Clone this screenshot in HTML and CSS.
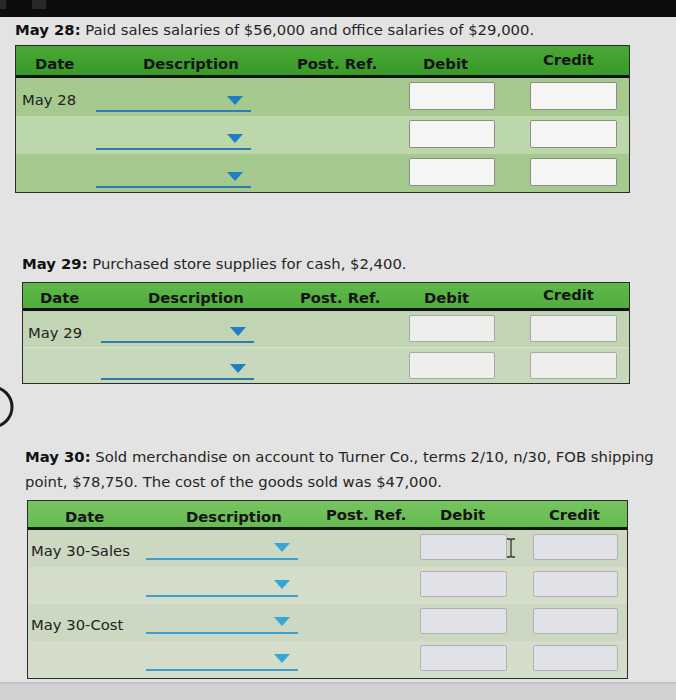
FILE: index.html
```html
<!DOCTYPE html>
<html>
<head>
<meta charset="utf-8">
<link rel="stylesheet" href="styles.css">
</head>
<body>
<div class="page">
  <div class="topbar"><span class="tb-icon a"></span><span class="tb-icon b"></span></div>

  <section class="entry e1">
    <p class="title"><b>May 28:</b> Paid sales salaries of $56,000 and office salaries of $29,000.</p>
    <div class="jtable t1">
      <div class="head">
        <span class="h-date">Date</span><span class="h-desc">Description</span><span class="h-post">Post. Ref.</span><span class="h-debit">Debit</span><span class="h-credit">Credit</span>
      </div>
      <div class="row dark"><span class="date">May 28</span><span class="dd"><i class="tri"></i></span><span></span><span class="in debit"></span><span class="in credit"></span></div>
      <div class="row light"><span class="date"></span><span class="dd"><i class="tri"></i></span><span></span><span class="in debit"></span><span class="in credit"></span></div>
      <div class="row dark"><span class="date"></span><span class="dd"><i class="tri"></i></span><span></span><span class="in debit"></span><span class="in credit"></span></div>
    </div>
  </section>

  <section class="entry e2">
    <p class="title"><b>May 29:</b> Purchased store supplies for cash, $2,400.</p>
    <div class="jtable t2">
      <div class="head">
        <span class="h-date">Date</span><span class="h-desc">Description</span><span class="h-post">Post. Ref.</span><span class="h-debit">Debit</span><span class="h-credit">Credit</span>
      </div>
      <div class="row dark"><span class="date">May 29</span><span class="dd"><i class="tri"></i></span><span></span><span class="in debit"></span><span class="in credit"></span></div>
      <div class="row light"><span class="date"></span><span class="dd"><i class="tri"></i></span><span></span><span class="in debit"></span><span class="in credit"></span></div>
    </div>
  </section>

  <section class="entry e3">
    <p class="title"><b>May 30:</b> Sold merchandise on account to Turner Co., terms 2/10, n/30, FOB shipping<br>point, $78,750. The cost of the goods sold was $47,000.</p>
    <div class="jtable t3">
      <div class="head">
        <span class="h-date">Date</span><span class="h-desc">Description</span><span class="h-post">Post. Ref.</span><span class="h-debit">Debit</span><span class="h-credit">Credit</span>
      </div>
      <div class="row dark"><span class="date">May 30-Sales</span><span class="dd"><i class="tri"></i></span><span></span><span class="in debit"></span><span class="in credit"></span></div>
      <div class="row light"><span class="date"></span><span class="dd"><i class="tri"></i></span><span></span><span class="in debit"></span><span class="in credit"></span></div>
      <div class="row dark"><span class="date">May 30-Cost</span><span class="dd"><i class="tri"></i></span><span></span><span class="in debit"></span><span class="in credit"></span></div>
      <div class="row light"><span class="date"></span><span class="dd"><i class="tri"></i></span><span></span><span class="in debit"></span><span class="in credit"></span></div>
      <svg class="ibeam" width="10" height="20" viewBox="0 0 10 20"><path d="M1 1 H4 L5 2 L6 1 H9 M5 2 V18 M1 19 H4 L5 18 L6 19 H9" fill="none" stroke="#333" stroke-width="1.3"/></svg>
    </div>
  </section>

  <div class="bottomband"></div>
  <svg class="arc" width="20" height="50" viewBox="0 0 20 50"><circle cx="-8" cy="24" r="20" fill="none" stroke="#1e1a1a" stroke-width="3"/></svg>
</div>
</body>
</html>
```
FILE: styles.css
```css
* { box-sizing: border-box; }
html, body { margin: 0; padding: 0; }
body {
  background: #e4e3e3;
  font-family: "DejaVu Sans", Verdana, sans-serif;
  color: #222;
  width: 676px;
  height: 700px;
  overflow: hidden;
}
.page { position: relative; width: 676px; height: 700px; }

.topbar { height: 17px; background: #0e0d0d; display: flex; gap: 20px; padding-left: 0; }
.tb-icon { display: block; height: 9px; background: #2a2828; }
.tb-icon.a { width: 6px; }
.tb-icon.b { width: 14px; margin-left: 6px; }

.title { margin: 0; font-size: 14.8px; line-height: 18px; color: #262626; }
.title b { color: #111; }

.entry.e1 { padding: 4px 0 0 15px; }
.entry.e1 .jtable { margin-top: 6px; width: 615px; }
.entry.e2 { padding: 62px 0 0 22px; }
.entry.e2 .jtable { margin-top: 9px; width: 608px; }
.entry.e3 { padding: 60px 0 0 25px; }
.entry.e3 .title { line-height: 25px; }
.entry.e3 .jtable { margin-top: 6px; margin-left: 2px; width: 601px; }

.jtable { position: relative; border: 1px solid #2b2b2b; }
.head {
  display: grid;
  align-items: center;
  font-weight: bold;
  font-size: 14.8px;
  color: #141414;
  border-bottom: 3px solid #121212;
}
.row { display: grid; align-items: start; font-size: 14.8px; color: #222; }

/* table 1 */
.t1 .head { height: 32px; padding-top: 5px; background: linear-gradient(#4aa736, #389a28); }
.t1 .head, .t1 .row { grid-template-columns: 77px 163px 149px 96px 1fr; }
.t1 .h-date { padding-left: 19px; }
.t1 .h-desc { padding-left: 50px; }
.t1 .h-post { padding-left: 41px; }
.t1 .h-debit { padding-left: 18px; }
.t1 .h-credit { padding-left: 42px; margin-top: -8px; }
.t1 .row { height: 38px; }
.t1 .row.dark { background: #a5c98f; }
.t1 .row.light { background: #bcd8aa; }
.t1 .date { padding: 13px 0 0 6px; }
.t1 .dd { margin: 18px 0 0 3px; width: 155px; height: 16px; }
.t1 .in { height: 28px; margin-top: 4px; background: #f5f5f3; border: 1px solid #8c8c8c; border-radius: 2px; }
.t1 .in.debit { margin-left: 4px; width: 86px; }
.t1 .in.credit { margin-left: 29px; width: 87px; }

/* table 2 */
.t2 .head { height: 28px; padding-top: 3px; background: linear-gradient(#5db949, #52ac3e); }
.t2 .head, .t2 .row { grid-template-columns: 78px 155px 150px 100px 1fr; }
.t2 .h-date { padding-left: 17px; }
.t2 .h-desc { padding-left: 47px; }
.t2 .h-post { padding-left: 44px; }
.t2 .h-debit { padding-left: 18px; }
.t2 .h-credit { padding-left: 37px; margin-top: -6px; }
.t2 .row { height: 36px; }
.t2 .row.dark { background: #c1d4b4; }
.t2 .row.light { background: #c8d8bd; border-top: 1px solid #d6e0cd; }
.t2 .date { padding: 13px 0 0 5px; }
.t2 .dd { margin: 16px 0 0 0; width: 153px; height: 16px; }
.t2 .in { height: 27px; margin-top: 4px; background: #eeeeec; border: 1px solid #a8a8a8; border-radius: 2px; }
.t2 .in.debit { margin-left: 3px; width: 86px; }
.t2 .in.credit { margin-left: 24px; width: 87px; }

/* table 3 */
.t3 .head { height: 29px; padding-top: 4px; background: linear-gradient(#75c45f, #66bb52); }
.t3 .head, .t3 .row { grid-template-columns: 118px 156px 115px 110px 1fr; }
.t3 .h-date { padding-left: 37px; }
.t3 .h-desc { padding-left: 40px; }
.t3 .h-post { padding-left: 24px; margin-top: -4px; }
.t3 .h-debit { padding-left: 23px; margin-top: -4px; }
.t3 .h-credit { padding-left: 22px; margin-top: -4px; }
.t3 .row { height: 37px; }
.t3 .row.dark { background: #ccd8c1; }
.t3 .row.light { background: #d3ddca; }
.t3 .date { padding: 12px 0 0 3px; }
.t3 .dd { margin: 13px 0 0 0; width: 152px; height: 17px; }
.t3 .dd .tri { border-top-color: #35a6d8; }
.t3 .dd { border-bottom-color: #3a9fcc; }
.t3 .in { height: 26px; margin-top: 4px; background: #e0e2e7; border: 1px solid #b4b0b4; border-radius: 2px; }
.t3 .in.debit { margin-left: 3px; width: 87px; }
.t3 .in.credit { margin-left: 6px; width: 85px; }

/* dropdown */
.dd {
  display: flex;
  justify-content: flex-end;
  align-items: flex-start;
  border-bottom: 2px solid #2b7db4;
  padding-right: 8px;
}
.tri {
  display: block;
  width: 0; height: 0;
  border-left: 8px solid transparent;
  border-right: 8px solid transparent;
  border-top: 9px solid #1f7fc2;
}

.ibeam { position: absolute; left: 478px; top: 37px; }

.bottomband {
  position: absolute;
  left: 0; right: 0; top: 682px; bottom: 0;
  background: #d2d2d4;
  border-top: 2px solid #c4c4c6;
}
.arc { position: absolute; left: 0; top: 383px; }
```
